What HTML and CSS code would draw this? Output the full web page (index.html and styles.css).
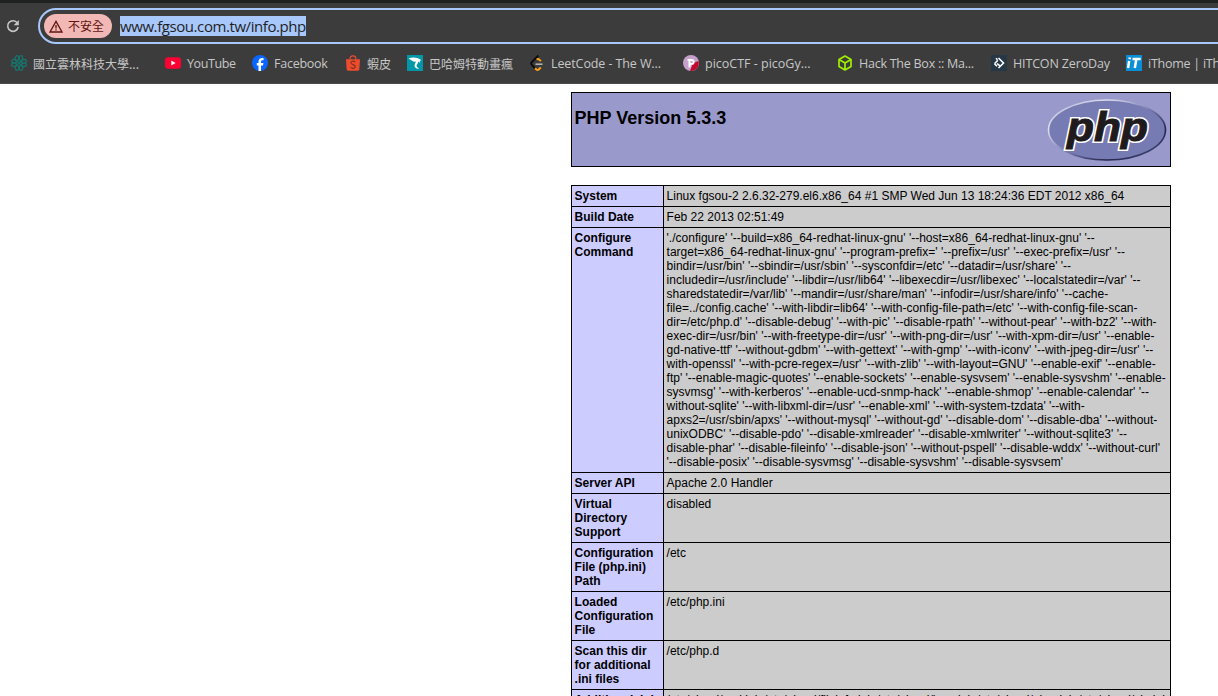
FILE: index.html
```html
<!DOCTYPE html>
<html lang="zh-Hant">
<head>
    <meta charset="UTF-8">
    <title>phpinfo()</title>
    <link rel="stylesheet" href="styles.css">
</head>
<body>
<div class="browser">
  <div class="tabstrip"></div>
  <div class="toolbar">
    <svg class="reload" width="14" height="14" viewBox="0 0 14 14"><path d="M11.300 3.900A5.300 5.300 0 1 0 12.200 8" fill="none" stroke="#c7c7c7" stroke-width="1.600"/><path d="M12.800 1v5.200H7.700z" fill="#c7c7c7"/></svg>
    <div class="address">
      <div class="chip">
        <svg width="14" height="13" viewBox="0 0 14 13"><path d="M7 1.400L13 12H1z" fill="none" stroke="#601410" stroke-width="1.300"/><path d="M7 5v3.400M7 9.300v1.300" stroke="#601410" stroke-width="1.300"/></svg>
        <span>不安全</span>
      </div>
      <span class="url">www.fgsou.com.tw/info.php</span>
    </div>
  </div>
  <div class="bookmarks">
    <div class="mark w154 zh">
      <svg width="16" height="16" viewBox="0 0 16 16"><g fill="none" stroke="#17736b" stroke-width="1.300"><ellipse cx="6" cy="3.200" rx="1.700" ry="2.500"/><ellipse cx="10" cy="3.200" rx="1.700" ry="2.500"/><ellipse cx="6" cy="12.800" rx="1.700" ry="2.500"/><ellipse cx="10" cy="12.800" rx="1.700" ry="2.500"/><ellipse cx="3" cy="6.200" rx="2.500" ry="1.700"/><ellipse cx="3" cy="9.800" rx="2.500" ry="1.700"/><ellipse cx="13" cy="6.200" rx="2.500" ry="1.700"/><ellipse cx="13" cy="9.800" rx="2.500" ry="1.700"/><path d="M5 5l6 6M11 5l-6 6"/></g></svg>
      <span>國立雲林科技大學...</span>
    </div>
    <div class="mark w87 yt">
      <svg width="16" height="16" viewBox="0 0 16 16"><rect y="2.300" width="16" height="11.400" rx="3" fill="#ff0033"/><path d="M6.300 5.500v5L10.600 8z" fill="#fff"/></svg>
      <span>YouTube</span>
    </div>
    <div class="mark w93 fb">
      <svg width="16" height="16" viewBox="0 0 16 16"><circle cx="8" cy="8" r="8" fill="#0866ff"/><path d="M6.500 16v-5.600H4.800V8h1.700V6.800c0-2.600 1.200-3.900 3.700-3.900.5 0 1 .1 1.300.2v2.100h-1c-1.100 0-1.500.5-1.500 1.600V8h2.400l-.4 2.400h-2V16z" fill="#fff"/></svg>
      <span>Facebook</span>
    </div>
    <div class="mark w62 zh">
      <svg width="16" height="16" viewBox="0 0 16 16"><path d="M1 4.200h14l-.7 10.400q-.1 1.100-1.200 1.100H2.900q-1.100 0-1.200-1.100z" fill="#ee4d2d"/><path d="M5 4.200C5 -.3 11 -.3 11 4.200" fill="none" stroke="#ee4d2d" stroke-width="1.200"/><path d="M10.300 7C8 5.400 5.600 6.300 5.900 8c.3 1.700 4.300 1.500 4.400 3.500.1 2-3 2.500-4.800.9" fill="none" stroke="#833020" stroke-width="1.200"/></svg>
      <span>蝦皮</span>
    </div>
    <div class="mark w123 zh">
      <svg width="16" height="16" viewBox="0 0 16 16"><path d="M0 0h16v16H0z" fill="#0097a8"/><path d="M1.500 3.500C5 1.800 10 2 14.500 5l-1.700.7.2 2-2-1.200c.5 2.500-2 3.300-1.300 4.800.3 1.200 1.800 1.500 2.300 2.700-3-.2-4.800-2-4.400-4C8 8 9 7.800 8.600 6.600 6.500 7.200 4 5 1.500 3.500z" fill="#fff"/></svg>
      <span>巴哈姆特動畫瘋</span>
    </div>
    <div class="mark w153 lc">
      <svg width="16" height="16" viewBox="0 0 16 16"><path d="M8.300 .5L1.800 7.200q-1.200 1.300 0 2.600L5.200 13.500" fill="none" stroke="#0a0a0a" stroke-width="1.900"/><path d="M11 6L9 4.400q-1.200-.8-2.300.2M5 13.300l1.700 1.500q1 .6 2-.3l2.100-2" fill="none" stroke="#ffa116" stroke-width="1.900"/><path d="M5.500 9.200h7" stroke="#b3b3b3" stroke-width="1.600"/></svg>
      <span>LeetCode - The W...</span>
    </div>
    <div class="mark w154 pc">
      <svg width="16" height="16" viewBox="0 0 16 16"><circle cx="8" cy="8" r="8" fill="#c5a0cb"/><path d="M7 16A8 8 0 0 0 15.500 6L10 8z" fill="#c4092f"/><path d="M6.500 12.500V5H8.700a1.900 1.900 0 0 1 0 3.900H7M4.500 4.900h2" fill="none" stroke="#fff" stroke-width="1.900"/></svg>
      <span>picoCTF - picoGy...</span>
    </div>
    <div class="mark w154 hb">
      <svg width="16" height="16" viewBox="0 0 16 16"><path d="M8 1l6 3.500v7L8 15l-6-3.500v-7zM2 4.500L8 8l6-3.500M8 8v7" fill="none" stroke="#9fef00" stroke-width="1.700" stroke-linejoin="round"/></svg>
      <span>Hack The Box :: Ma...</span>
    </div>
    <div class="mark w135 hz">
      <svg width="16" height="16" viewBox="0 0 16 16"><path d="M0 0h16v16H0z" fill="#263746"/><path d="M5 3.200l1.500 1.500M7.500 3l5 5-5 5M6.800 5.300L3.500 8.700M6 8.500l2.700 2.200M3.500 8.700L6 11.200" fill="none" stroke="#fff" stroke-width="1.600"/></svg>
      <span>HITCON ZeroDay</span>
    </div>
    <div class="mark it">
      <svg width="16" height="16" viewBox="0 0 16 16"><path d="M0 0h16v16H0z" fill="#0a8fd6"/><path d="M3.200 6L2 13M3.900 2.500l-.3 1.800M6.500 4h8.200M10.400 4L8.800 13" fill="none" stroke="#fff" stroke-width="2.500"/></svg>
      <span>iThome | iThome</span>
    </div>
  </div>
</div>

<div class="center">
<table class="head">
<tr class="h"><td>
<svg class="logo" width="120" height="67" viewBox="0 0 120 67">
  <defs>
    <linearGradient id="rim" x1="0" y1="0" x2="1" y2="1">
      <stop offset="0" stop-color="#a9acd2"/><stop offset=".25" stop-color="#dcddec"/><stop offset=".5" stop-color="#7b7fb5"/><stop offset=".75" stop-color="#22244a"/><stop offset="1" stop-color="#5b5f94"/>
    </linearGradient>
  </defs>
  <ellipse cx="60" cy="34" rx="58.500" ry="30" fill="#777bb3" stroke="url(#rim)" stroke-width="1.600"/>
  <text class="php edge" x="20" y="44.500" textLength="81" lengthAdjust="spacingAndGlyphs">php</text>
  <text class="php" x="20" y="44.500" textLength="81" lengthAdjust="spacingAndGlyphs" aria-hidden="true">php</text>
</svg>
<h1>PHP Version 5.3.3</h1>
</td></tr>
</table>
<table class="info">
<tr><td class="e">System</td><td class="v">Linux fgsou-2 2.6.32-279.el6.x86_64 #1 SMP Wed Jun 13 18:24:36 EDT 2012 x86_64</td></tr>
<tr><td class="e">Build Date</td><td class="v">Feb 22 2013 02:51:49</td></tr>
<tr><td class="e">Configure<br>Command</td><td class="v">'./configure' '--build=x86_64-redhat-linux-gnu' '--host=x86_64-redhat-linux-gnu' '--<br>
target=x86_64-redhat-linux-gnu' '--program-prefix=' '--prefix=/usr' '--exec-prefix=/usr' '--<br>
bindir=/usr/bin' '--sbindir=/usr/sbin' '--sysconfdir=/etc' '--datadir=/usr/share' '--<br>
includedir=/usr/include' '--libdir=/usr/lib64' '--libexecdir=/usr/libexec' '--localstatedir=/var' '--<br>
sharedstatedir=/var/lib' '--mandir=/usr/share/man' '--infodir=/usr/share/info' '--cache-<br>
file=../config.cache' '--with-libdir=lib64' '--with-config-file-path=/etc' '--with-config-file-scan-<br>
dir=/etc/php.d' '--disable-debug' '--with-pic' '--disable-rpath' '--without-pear' '--with-bz2' '--with-<br>
exec-dir=/usr/bin' '--with-freetype-dir=/usr' '--with-png-dir=/usr' '--with-xpm-dir=/usr' '--enable-<br>
gd-native-ttf' '--without-gdbm' '--with-gettext' '--with-gmp' '--with-iconv' '--with-jpeg-dir=/usr' '--<br>
with-openssl' '--with-pcre-regex=/usr' '--with-zlib' '--with-layout=GNU' '--enable-exif' '--enable-<br>
ftp' '--enable-magic-quotes' '--enable-sockets' '--enable-sysvsem' '--enable-sysvshm' '--enable-<br>
sysvmsg' '--with-kerberos' '--enable-ucd-snmp-hack' '--enable-shmop' '--enable-calendar' '--<br>
without-sqlite' '--with-libxml-dir=/usr' '--enable-xml' '--with-system-tzdata' '--with-<br>
apxs2=/usr/sbin/apxs' '--without-mysql' '--without-gd' '--disable-dom' '--disable-dba' '--without-<br>
unixODBC' '--disable-pdo' '--disable-xmlreader' '--disable-xmlwriter' '--without-sqlite3' '--<br>
disable-phar' '--disable-fileinfo' '--disable-json' '--without-pspell' '--disable-wddx' '--without-curl'<br>
'--disable-posix' '--disable-sysvmsg' '--disable-sysvshm' '--disable-sysvsem'</td></tr>
<tr><td class="e">Server API</td><td class="v">Apache 2.0 Handler</td></tr>
<tr><td class="e">Virtual<br>Directory<br>Support</td><td class="v">disabled</td></tr>
<tr><td class="e">Configuration<br>File (php.ini)<br>Path</td><td class="v">/etc</td></tr>
<tr><td class="e">Loaded<br>Configuration<br>File</td><td class="v">/etc/php.ini</td></tr>
<tr><td class="e">Scan this dir<br>for additional<br>.ini files</td><td class="v">/etc/php.d</td></tr>
<tr><td class="e">Additional .ini<br>files parsed</td><td class="v">/etc/php.d/curl.ini, /etc/php.d/fileinfo.ini, /etc/php.d/json.ini, /etc/php.d/phar.ini, /etc/php.d/zip.ini</td></tr>
</table>
</div>
</body>
</html>
```
FILE: styles.css
```css
body {
    margin: 0;
    width: 1218px;
    height: 696px;
    overflow: hidden;
    background-color: #fff;
    color: #000;
    font-family: "Liberation Sans", Arial, sans-serif;
}

/* browser bars */
.browser {
    height: 84px;
    overflow: hidden;
    background-color: #3c3c3c;
    box-sizing: border-box;
    border-bottom: 1px solid #4a4a4a;
}
.tabstrip { height: 3px; background-color: #1f2020; }
.toolbar {
    display: flex;
    align-items: center;
    width: 1742px;
    height: 46px;
    padding-left: 6px;
    box-sizing: border-box;
}
.reload { margin-right: 18px; }
.address {
    display: flex;
    align-items: center;
    flex: 1;
    height: 36px;
    box-sizing: border-box;
    border: 2px solid #a8c7fa;
    border-radius: 18px;
    padding-left: 4px;
}
.chip {
    display: flex;
    align-items: center;
    gap: 5px;
    width: 68px;
    height: 24px;
    padding-left: 5px;
    box-sizing: border-box;
    border-radius: 12px;
    background-color: #f2b8b5;
    color: #601410;
    font: 12px/24px "Noto Sans CJK TC", sans-serif;
}
.url {
    margin-left: 8px;
    width: 186px;
    background-color: #a8c7fa;
    color: #1f1f1f;
    font: 15px/20px "Open Sans", sans-serif;
    letter-spacing: -0.42px;
    white-space: nowrap;
}
.bookmarks {
    display: flex;
    width: 1742px;
    height: 28px;
    padding-left: 11px;
}
.mark {
    display: flex;
    align-items: center;
    gap: 6px;
    flex: none;
    color: #c7c7c7;
    font: 12.5px/28px "Open Sans", "Noto Sans CJK TC", sans-serif;
    letter-spacing: -0.25px;
    white-space: nowrap;
}
.mark span { padding-top: 1px; }
.zh {
    font: 12px/28px "Noto Sans CJK TC", sans-serif;
    letter-spacing: 0;
}
.yt { letter-spacing: -0.4px; }
.lc { gap: 5px; letter-spacing: -0.1px; }
.pc { letter-spacing: 0; }
.hz { letter-spacing: -0.15px; }
.w62 { width: 62px; }
.w87 { width: 87px; }
.w93 { width: 93px; }
.w123 { width: 123px; }
.w135 { width: 135px; }
.w153 { width: 153px; }
.w154 { width: 154px; }

/* phpinfo */
.center {
    width: 1742px;
    padding-top: 8px;
}
table {
    width: 600px;
    margin: 0 auto 18px;
    border-collapse: collapse;
}
td {
    border: 1px solid #000;
    padding: 3px 3px 3px 2.600px;
    font-size: 12px;
    line-height: 14px;
    vertical-align: baseline;
    white-space: nowrap;
}
.head { height: 75px; }
.h { background-color: #9999cc; }
.h td { vertical-align: top; }
.logo { float: right; }
.php {
    font: italic bold 40px "Liberation Sans", sans-serif;
    fill: #1f1a1d;
    stroke: #1f1a1d;
    stroke-width: 1px;
}
.edge {
    stroke: #fff;
    stroke-width: 4px;
}
h1 {
    margin: 12px 0 0;
    font-size: 18px;
    line-height: 21px;
}
.info { table-layout: fixed; }
.e {
    width: 85.400px;
    background-color: #ccccff;
    font-weight: bold;
}
.v {
    background-color: #cccccc;
    overflow: hidden;
}
```
